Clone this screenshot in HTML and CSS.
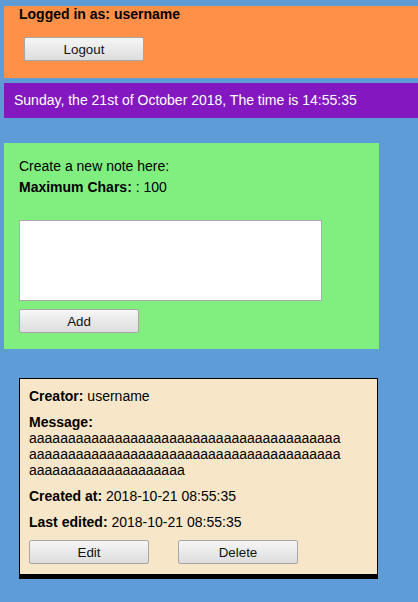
FILE: index.html
```html
<!DOCTYPE html>
<html lang="en">
<head>
<meta charset="utf-8">
<title>Notes</title>
<link rel="stylesheet" href="styles.css">
</head>
<body>
<header class="topbar">
  <div class="user"><b>Logged in as: username</b></div>
  <button class="btn btn-logout" type="button">Logout</button>
</header>
<div class="datebar">Sunday, the 21st of October 2018, The time is 14:55:35</div>
<section class="composer">
  <div class="line">Create a new note here:</div>
  <div class="line line-max"><b>Maximum Chars:</b> : 100</div>
  <textarea class="note-input"></textarea>
  <div class="actions-add"><button class="btn" type="button">Add</button></div>
</section>
<article class="note">
  <div class="row"><b>Creator:</b> username</div>
  <div class="row row-gap"><b>Message:</b></div>
  <div class="message">aaaaaaaaaaaaaaaaaaaaaaaaaaaaaaaaaaaaaaaaaaaaaaaaaaaaaaaaaaaaaaaaaaaaaaaaaaaaaaaaaaaaaaaaaaaaaaaaaaaa</div>
  <div class="row row-gap"><b>Created at:</b> 2018-10-21 08:55:35</div>
  <div class="row row-gap"><b>Last edited:</b> 2018-10-21 08:55:35</div>
  <div class="note-actions">
    <button class="btn" type="button">Edit</button>
    <button class="btn" type="button">Delete</button>
  </div>
</article>
</body>
</html>
```
FILE: styles.css
```css
html, body {
  margin: 0;
  padding: 0;
}
body {
  background: #5e9cd8;
  font-family: "Liberation Sans", Arial, sans-serif;
  font-size: 14px;
  line-height: 16px;
  color: #000;
  overflow: hidden;
}
.btn {
  box-sizing: border-box;
  width: 120px;
  height: 24px;
  margin: 0;
  padding: 0;
  font-family: "Liberation Sans", Arial, sans-serif;
  font-size: 13.333px;
  color: #111;
  background: linear-gradient(#f6f6f6, #dddddd);
  border: 1px solid #a7a7a7;
  border-radius: 2px;
}
.topbar {
  margin: 6px 0 0 4px;
  padding: 0 15px 17px 15px;
  background: #ff9048;
}
.btn-logout {
  display: block;
  margin: 15px 0 0 5px;
}
.datebar {
  margin: 5px 0 0 4px;
  height: 35px;
  line-height: 35px;
  padding: 0 10px;
  background: #8418c0;
  color: #fff;
}
.composer {
  box-sizing: border-box;
  width: 375px;
  margin: 25px 0 0 4px;
  padding: 15px 15px 16px 15px;
  background: #81ef80;
  display: flex;
  flex-direction: column;
  align-items: flex-start;
}
.line-max {
  margin-top: 5px;
}
.note-input {
  box-sizing: border-box;
  width: 303px;
  height: 81px;
  margin: 25px 0 0 0;
  padding: 2px;
  background: #fff;
  border: 1px solid #a9a9a9;
  resize: none;
  display: block;
}
.actions-add {
  margin-top: 8px;
  display: flex;
}
.note {
  box-sizing: border-box;
  width: 359px;
  margin: 29px 0 0 19px;
  padding: 9px 9px 10px 9px;
  background: #f8e6c8;
  border: 1px solid #000;
  border-bottom-width: 5px;
}
.row-gap {
  margin-top: 10px;
}
.message {
  width: 315px;
  word-break: break-all;
}
.note-actions {
  margin-top: 10px;
  display: flex;
  gap: 29px;
}
```
